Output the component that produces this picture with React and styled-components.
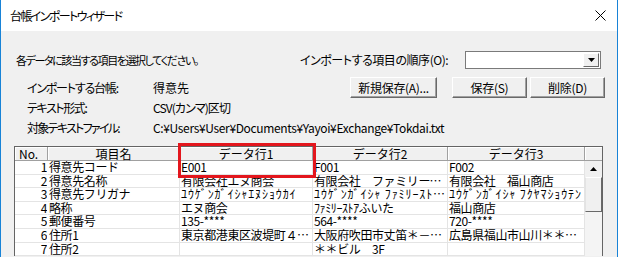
import styled, { createGlobalStyle } from "styled-components";

const GlobalStyle = createGlobalStyle`
  html, body {
    margin: 0;
    padding: 0;
    background: #f0f0f0;
  }
  body {
    font-family: "Noto Sans CJK JP", "Noto Sans", sans-serif;
    font-size: 12px;
    color: #000;
  }
`;

const Window = styled.div`
  width: 618px;
  height: 257px;
  box-sizing: border-box;
  border-left: 1px solid #1883d7;
  border-right: 1px solid #1883d7;
  background: #f0f0f0;
  display: flex;
  flex-direction: column;
  overflow: hidden;
`;

const TitleBar = styled.div`
  height: 31px;
  flex: none;
  background: #fff;
  display: flex;
  align-items: center;
  justify-content: space-between;
  padding: 0 11px 0 9px;
`;

const Text = styled.span`
  font-size: ${(p) => p.$size || 12}px;
  line-height: 14px;
  white-space: nowrap;
  font-feature-settings: "palt";
  letter-spacing: ${(p) => p.$ls || 0}px;
`;

const Title = styled(Text)``;

const Body = styled.div`
  flex: 1;
  display: flex;
  flex-direction: column;
  padding: 19px 12px 0 13px;
`;

const TopRow = styled.div`
  height: 20px;
  display: flex;
  align-items: center;
`;

const Instruction = styled(Text)`
  flex: 1;
  padding-left: 2px;
`;

const OrderLabel = styled(Text)`
  width: 165px;
`;

const Combo = styled.div`
  width: 136px;
  height: 18px;
  margin-right: 4px;
  box-sizing: border-box;
  background: #fff;
  border: 1px solid #7a7a7a;
  display: flex;
  justify-content: flex-end;
  padding: 1px;
`;

const ComboButton = styled.div`
  width: 16px;
  box-sizing: border-box;
  background: #f0f0f0;
  border: 1px solid;
  border-color: #fff #696969 #696969 #fff;
  display: flex;
  align-items: center;
  justify-content: center;
`;

const InfoBlock = styled.div`
  margin-top: 7px;
  display: flex;
  flex-direction: column;
`;

const InfoRow = styled.div`
  height: ${(p) => p.$h || 20}px;
  display: flex;
  align-items: center;
`;

const Label = styled(Text)`
  width: 126px;
  padding-left: 13px;
`;

const Value = styled(Text)`
  flex: 1;
`;

const Button = styled.button`
  width: ${(p) => p.$w}px;
  height: 21px;
  margin-left: ${(p) => p.$gap || 0}px;
  padding: 0;
  box-sizing: border-box;
  background: #f0f0f0;
  border: 1px solid;
  border-color: #fff #696969 #696969 #fff;
  box-shadow: inset -1px -1px 0 #a0a0a0;
  font-family: inherit;
  font-size: 12px;
  line-height: 14px;
  color: #000;
  font-feature-settings: "palt";
  letter-spacing: -0.3px;
`;

const Grid = styled.div`
  position: relative;
  margin: 8px 2px 0 0;
  width: 589px;
  box-sizing: border-box;
  border: 1px solid #646464;
  border-bottom: none;
  background: #fff;
  display: grid;
  grid-template-columns: 33px 132px 133px 135px 137px 17px;
  grid-template-rows: 14px repeat(7, 13.6px);
`;

const HeadCell = styled.div`
  background: #f0f0f0;
  box-sizing: border-box;
  border-right: 1px solid #a0a0a0;
  border-bottom: 1px solid #a0a0a0;
  box-shadow: inset 1px 1px 0 #fff;
  text-align: ${(p) => p.$align || "center"};
  padding-left: ${(p) => (p.$align ? 4 : 0)}px;
  line-height: 13px;
  white-space: nowrap;
`;

const Cell = styled.div`
  box-sizing: border-box;
  background: #fff;
  border-bottom: 1px solid #e4e4e4;
  border-right: 1px solid ${(p) => (p.$noDivider ? "#fff" : "#e4e4e4")};
  text-align: ${(p) => p.$align || "left"};
  padding-left: ${(p) => (p.$align === "right" ? 0 : 1)}px;
  line-height: 12.6px;
  letter-spacing: ${(p) => (p.$ls === undefined ? -0.4 : p.$ls)}px;
  white-space: nowrap;
  overflow: hidden;
  text-overflow: ellipsis;
`;

const ScrollColumn = styled.div`
  grid-column: 6;
  grid-row: 1 / span 8;
  display: flex;
  flex-direction: column;
  background: #f0f0f0;
`;

const ScrollHead = styled.div`
  height: 14px;
  flex: none;
  box-sizing: border-box;
  background: #f0f0f0;
  border-bottom: 1px solid #a0a0a0;
  box-shadow: inset 1px 1px 0 #fff;
`;

const ScrollArrow = styled.div`
  height: 16px;
  flex: none;
  display: flex;
  align-items: center;
  justify-content: center;
  background: #f0f0f0;
`;

const ScrollThumb = styled.div`
  height: 35px;
  flex: none;
  box-sizing: border-box;
  background: #f0f0f0;
  border: 1px solid;
  border-color: #fff #696969 #696969 #e3e3e3;
`;

const ScrollTrack = styled.div`
  flex: 1;
  background: #f4f4f4;
`;

const Highlight = styled.div`
  position: absolute;
  left: 163px;
  top: -4px;
  width: 138px;
  height: 35px;
  box-sizing: border-box;
  border: 3px solid #e3161d;
  pointer-events: none;
`;

const CloseIcon = () => (
  <svg width="11" height="11" viewBox="0 0 11 11">
    <path d="M0.5 0.5 L10.5 10.5 M10.5 0.5 L0.5 10.5" stroke="#000" strokeWidth="1" />
  </svg>
);

const Triangle = ({ up }) => (
  <svg width="7" height="4" viewBox="0 0 7 4">
    <path d={up ? "M3.5 0 L7 4 L0 4 Z" : "M0 0 L7 0 L3.5 4 Z"} fill="#000" />
  </svg>
);

const columns = ["No.", "項目名", "データ行1", "データ行2", "データ行3"];

// half-width kana rows get a little extra spacing to match the wider system font
const rows = [
  { cells: ["1", "得意先コード", "E001", "F001", "F002"] },
  { cells: ["2", "得意先名称", "有限会社エヌ商会", "有限会社　ファミリーストアふいた", "有限会社　福山商店"] },
  {
    cells: ["3", "得意先フリガナ", "ﾕｳｹﾞﾝｶﾞｲｼｬｴﾇｼｮｳｶｲ", "ﾕｳｹﾞﾝｶﾞｲｼｬ ﾌｧﾐﾘｰｽﾄｱﾌｲﾀ", "ﾕｳｹﾞﾝｶﾞｲｼｬ ﾌｸﾔﾏｼｮｳﾃﾝ"],
    ls: 0.9,
  },
  { cells: ["4", "略称", "エヌ商会", "ﾌｧﾐﾘｰｽﾄｱふいた", "福山商店"] },
  { cells: ["5", "郵便番号", "135-****", "564-****", "720-****"] },
  { cells: ["6", "住所1", "東京都港東区波堤町４－＊＊＊", "大阪府吹田市丈笛＊－＊＊", "広島県福山市山川＊＊＊＊"] },
  { cells: ["7", "住所2", "", "＊＊ビル　3F", ""] },
];

export default function App() {
  return (
    <Window>
      <GlobalStyle />
      <TitleBar>
        <Title $ls={-1.6}>台帳インポートウィザード</Title>
        <CloseIcon />
      </TitleBar>
      <Body>
        <TopRow>
          <Instruction $size={11} $ls={-1.4}>各データに該当する項目を選択してください。</Instruction>
          <OrderLabel $ls={-0.45}>インポートする項目の順序(O):</OrderLabel>
          <Combo>
            <ComboButton>
              <Triangle />
            </ComboButton>
          </Combo>
        </TopRow>
        <InfoBlock>
          <InfoRow $h={21}>
            <Label $ls={-1.2}>インポートする台帳:</Label>
            <Value>得意先</Value>
            <Button $w={87}>新規保存(A)...</Button>
            <Button $w={75} $gap={15}>保存(S)</Button>
            <Button $w={75} $gap={3}>削除(D)</Button>
          </InfoRow>
          <InfoRow>
            <Label $ls={-1.4}>テキスト形式:</Label>
            <Value $ls={-0.9}>CSV(カンマ)区切</Value>
          </InfoRow>
          <InfoRow>
            <Label $ls={-1.7}>対象テキストファイル:</Label>
            <Value $ls={-0.35}>C:¥Users¥User¥Documents¥Yayoi¥Exchange¥Tokdai.txt</Value>
          </InfoRow>
        </InfoBlock>
        <Grid>
          {columns.map((c, i) => (
            <HeadCell key={c} $align={i === 0 ? "left" : undefined}>
              {c}
            </HeadCell>
          ))}
          <ScrollColumn>
            <ScrollHead />
            <ScrollArrow>
              <Triangle up />
            </ScrollArrow>
            <ScrollThumb />
            <ScrollTrack />
          </ScrollColumn>
          {rows.map((r) =>
            r.cells.map((v, i) => (
              <Cell
                key={r.cells[0] + "-" + i}
                $align={i === 0 ? "right" : undefined}
                $noDivider={i === 0}
                $ls={i > 1 && r.ls ? r.ls : undefined}
              >
                {v}
              </Cell>
            ))
          )}
          <Highlight />
        </Grid>
      </Body>
    </Window>
  );
}
